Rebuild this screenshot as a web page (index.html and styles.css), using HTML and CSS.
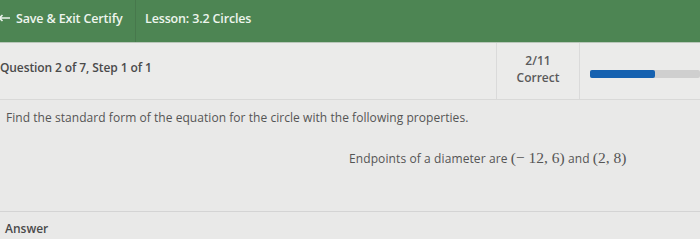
FILE: index.html
```html
<!DOCTYPE html>
<html lang="en">
<head>
  <meta charset="UTF-8" />
  <title>Lesson: 3.2 Circles</title>
  <link rel="stylesheet" href="styles.css">
</head>
<body>

  <div class="topbar">
    <div class="exit">
      <svg class="arrow" width="12" height="8" viewBox="0 0 12 8">
        <path d="M12 4H2M4.5 1L1.5 4L4.5 7" stroke="#e9f2ea" stroke-width="1.6" fill="none"/>
      </svg>
      <span>Save &amp; Exit Certify</span>
    </div>
    <div class="lesson">Lesson: 3.2 Circles</div>
  </div>

  <div class="status">
    <div class="step">Question 2 of 7, Step 1 of 1</div>
    <div class="score">
      <div>2/11</div>
      <div>Correct</div>
    </div>
    <div class="progress">
      <div class="track"><div class="fill" style="width: 59%"></div></div>
    </div>
  </div>

  <div class="question">
    <p class="prompt">Find the standard form of the equation for the circle with the following properties.</p>
    <p class="given">Endpoints of a diameter are <span class="math">(&minus; 12, 6)</span> and <span class="math">(2, 8)</span></p>
  </div>

  <div class="answer">Answer</div>

</body>
</html>
```

FILE: styles.css
```css
* {
  box-sizing: border-box;
}

body {
  margin: 0;
  width: 700px;
  height: 239px;
  overflow: hidden;
  font-family: "Open Sans", "Liberation Sans", sans-serif;
  background: #e9e9e8;
  color: #555;
}

.topbar {
  display: flex;
  height: 43px;
  background: #4d8553;
  color: #eef5ee;
  font-size: 12.5px;
  font-weight: 600;
  letter-spacing: -0.15px;
  border-bottom: 1px solid #b9c7ba;
}

.exit {
  display: flex;
  align-items: center;
  gap: 6px;
  width: 136px;
  padding-bottom: 6px;
  border-right: 1px solid #47784c;
}

.arrow {
  margin-left: -2px;
}

.lesson {
  display: flex;
  align-items: center;
  padding-left: 9px;
  padding-bottom: 6px;
}

.status {
  display: flex;
  height: 57px;
  background: #ebebea;
  border-bottom: 1px solid #d9d9d8;
}

.step {
  flex: 1;
  padding-top: 16px;
  font-size: 12px;
  font-weight: 600;
  color: #4a4a4a;
  letter-spacing: -0.1px;
}

.score {
  width: 84px;
  padding-top: 9px;
  text-align: center;
  font-size: 12px;
  font-weight: 600;
  line-height: 17px;
  color: #5a5a5a;
  border-left: 1px solid #dadada;
  border-right: 1px solid #dadada;
}

.progress {
  width: 120px;
  padding-top: 27px;
  padding-left: 10px;
}

.track {
  height: 8px;
  background: #cfcfcf;
  border-radius: 2px;
}

.fill {
  height: 100%;
  background: #1561b0;
  border-radius: 2px;
}

.question {
  height: 112px;
  border-bottom: 1px solid #d4d4d4;
}

.prompt {
  margin: 0;
  padding: 9px 0 0 6px;
  font-size: 12px;
  letter-spacing: 0.05px;
}

.given {
  margin: 23px 0 0 349px;
  font-size: 12px;
  letter-spacing: 0.1px;
}

.math {
  font-family: "Liberation Serif", serif;
  font-size: 15.5px;
  letter-spacing: 0;
}

.answer {
  padding: 9px 0 0 5px;
  font-size: 12px;
  font-weight: 600;
  line-height: 16px;
  color: #4a4a4a;
}
```
